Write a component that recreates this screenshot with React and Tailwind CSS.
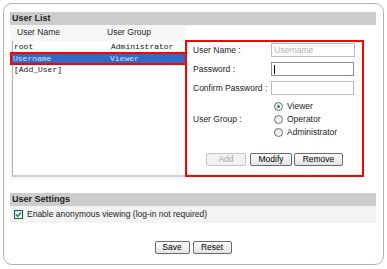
const users = [
  { name: 'root', group: 'Administrator' },
  { name: 'Username', group: 'Viewer', selected: true },
  { name: '[Add_User]', group: '' },
];

const Radio = ({ label, checked }) => (
  <label className="flex items-center h-[13px]">
    <span className="w-[9px] h-[9px] rounded-full border border-[#5f6f80] bg-gradient-to-br from-[#e0e0e0] to-white flex items-center justify-center">
      {checked && <span className="w-[3px] h-[3px] rounded-full bg-[#2a9a2a]" />}
    </span>
    <span className="ml-[4px]">{label}</span>
  </label>
);

const Btn = ({ children, disabled, w }) => (
  <button
    type="button"
    className={`h-[13px] ${w} rounded-[2px] border leading-[11px] text-[8.5px] ${disabled ? 'border-[#c4c4c4] bg-[#f2f2f2] text-[#a8a8a8]' : 'border-[#6a6a6a] bg-gradient-to-b from-white to-[#e2e2e2] text-black'}`}
  >
    {children}
  </button>
);

const Field = ({ label, children }) => (
  <div className="flex items-center h-[14px]">
    <span className="w-[78px]">{label}</span>
    {children}
  </div>
);

export default function App() {
  return (
    <div className="w-[387px] h-[269px] bg-white pt-[3px] pl-[3px] font-['Liberation_Sans',Arial,sans-serif] text-[8.5px] text-[#222]">
      <div className="w-[381px] h-[262px] border border-[#b4b4b4] rounded-[9px] pt-[8px] pl-[6px] pr-[7px] flex flex-col">
        {/* User List */}
        <div className="h-[13px] bg-[#cccccc] pl-[2px] font-bold text-[9px] leading-[13px] text-[#222]">User List</div>
        <div className="flex">
          <div className="w-[175px] bg-[#f6f6f6] pb-[3px]">
            <div className="h-[15px] flex items-center">
              <span className="w-[97px] pl-[7px]">User Name</span>
              <span>User Group</span>
            </div>
            <div className="mt-[1px] ml-[2px] w-[173px] h-[136px] bg-white border-l border-[#a9b0bb] border-b-2 border-b-[#d0d0d0] pt-[1px] font-['Liberation_Mono','Courier_New',monospace] text-[8px]">
              {users.map((u) =>
                u.selected ? (
                  <div key={u.name} className="relative z-10 ml-[-3px] w-[177px] h-[13px] border-2 border-[#ff0000] flex items-center">
                    <div className="w-full h-full bg-[#316ac5] text-[#d6e2ff] flex items-center pl-[1px]">
                      <span className="w-[97px]">{u.name}</span>
                      <span>{u.group}</span>
                    </div>
                  </div>
                ) : (
                  <div key={u.name} className="h-[10px] flex items-center pl-[1px] text-[#111]">
                    <span className="w-[97px]">{u.name}</span>
                    <span>{u.group}</span>
                  </div>
                )
              )}
            </div>
          </div>
          <div className="pt-[15px]">
            <div className="w-[179px] h-[137px] border-2 border-[#ff0000] pl-[6px] pt-[1px]">
              <div className="flex flex-col gap-[5px]">
                <Field label="User Name :">
                  <input
                    readOnly
                    placeholder="Username"
                    className="w-[84px] h-[14px] border border-[#b8bcc2] px-[2px] text-[8.5px] placeholder-[#b0b0b0] outline-none"
                  />
                </Field>
                <Field label="Password :">
                  <div className="w-[83px] h-[14px] border border-[#8a8e94] flex items-center pl-[2px]">
                    <span className="w-[1px] h-[9px] bg-black" />
                  </div>
                </Field>
                <Field label="Confirm Password :">
                  <div className="w-[83px] h-[14px] border border-[#b8bcc2]" />
                </Field>
              </div>
              <div className="flex mt-[5px]">
                <span className="w-[78px] self-center">User Group :</span>
                <div className="pl-[3px] flex flex-col">
                  <Radio label="Viewer" checked />
                  <Radio label="Operator" />
                  <Radio label="Administrator" />
                </div>
              </div>
              <div className="flex mt-[14px] pl-[13px]">
                <Btn disabled w="w-[40px]">Add</Btn>
                <div className="ml-[4px]"><Btn w="w-[42px]">Modify</Btn></div>
                <div className="ml-[2px]"><Btn w="w-[49px]">Remove</Btn></div>
              </div>
            </div>
          </div>
        </div>

        {/* User Settings */}
        <div className="mt-[13px] h-[13px] bg-[#cccccc] pl-[2px] font-bold text-[9px] leading-[13px] text-[#222]">User Settings</div>
        <div className="h-[17px] bg-[#f3f3f3] flex items-center pl-[4px]">
          <span className="w-[9px] h-[9px] border border-[#1c5180] bg-gradient-to-br from-[#dcdcd4] to-white flex items-center justify-center">
            <svg width="7" height="7" viewBox="0 0 7 7">
              <path d="M1 3.5 L2.8 5.3 L6 1.5" fill="none" stroke="#21a121" strokeWidth="1.6" />
            </svg>
          </span>
          <span className="ml-[4px]">Enable anonymous viewing (log-in not required)</span>
        </div>

        <div className="mt-[18px] flex justify-center gap-[3px]">
          <Btn w="w-[35px]">Save</Btn>
          <Btn w="w-[39px]">Reset</Btn>
        </div>
      </div>
    </div>
  );
}
